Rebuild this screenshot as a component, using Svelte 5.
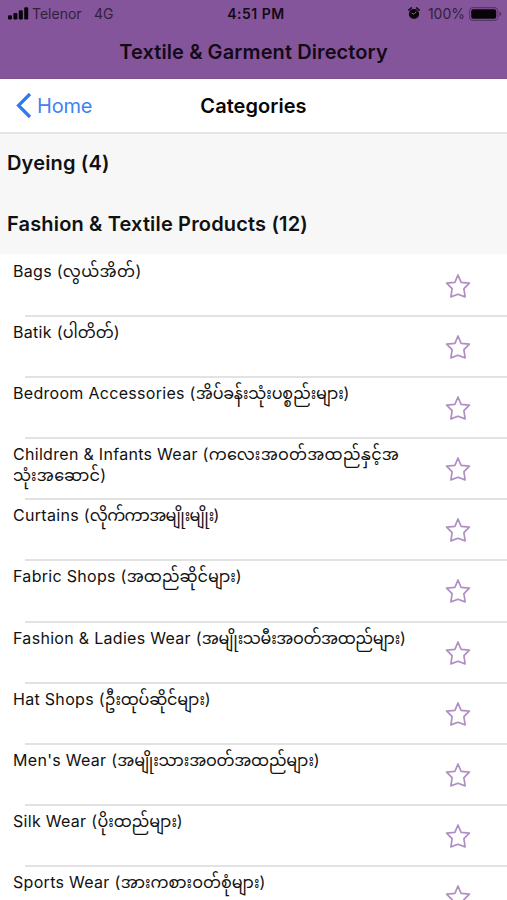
<script>
  const sections = ['Dyeing (4)', 'Fashion & Textile Products (12)'];
  const items = [
    { en: 'Bags', my: ['လွယ်အိတ်'], tracking: 0.35 },
    { en: 'Batik', my: ['ပါတိတ်'], tracking: 0 },
    { en: 'Bedroom Accessories', my: ['အိပ်ခန်းသုံးပစ္စည်းများ'], tracking: -0.2 },
    { en: 'Children & Infants Wear', my: ['ကလေးအဝတ်အထည်နှင့်အ', 'သုံးအဆောင်'], tracking: 0.25 },
    { en: 'Curtains', my: ['လိုက်ကာအမျိုးမျိုး'], tracking: -0.65 },
    { en: 'Fabric Shops', my: ['အထည်ဆိုင်များ'], tracking: 0 },
    { en: 'Fashion & Ladies Wear', my: ['အမျိုးသမီးအဝတ်အထည်များ'], tracking: -0.4 },
    { en: 'Hat Shops', my: ['ဦးထုပ်ဆိုင်များ'], tracking: -0.2 },
    { en: "Men's Wear", my: ['အမျိုးသားအဝတ်အထည်များ'], tracking: -0.27 },
    { en: 'Silk Wear', my: ['ပိုးထည်များ'], tracking: -0.1 },
    { en: 'Sports Wear', my: ['အားကစားဝတ်စုံများ'], tracking: 0 }
  ];
</script>

<div class="screen">
  <header>
    <div class="status">
      <svg class="signal" width="21" height="13" viewBox="0 0 21 13">
        <rect x="0" y="8.3" width="4" height="4.2" rx="1.2" />
        <rect x="5.4" y="6" width="4" height="6.5" rx="1.2" />
        <rect x="10.8" y="3.2" width="4" height="9.3" rx="1.2" />
        <rect x="16.2" y="0.3" width="4" height="12.2" rx="1.2" />
      </svg>
      <span class="carrier">Telenor</span>
      <span class="network">4G</span>
      <span class="time">4:51 PM</span>
      <svg class="alarm" width="12" height="13" viewBox="0 0 12 13">
        <circle cx="6" cy="7" r="5.1" />
        <path d="M.8 3.1 3.4.9M11.2 3.1 8.6.9" stroke="#120a16" stroke-width="1.6" stroke-linecap="round" />
        <path d="M8.2 4.5 6 7.3 3.8 6.2" fill="none" stroke="#85559b" stroke-width="1" stroke-linecap="round" />
      </svg>
      <span class="percent">100%</span>
      <svg class="battery" width="33" height="14" viewBox="0 0 33 14">
        <rect x="0.6" y="0.6" width="28.3" height="12.8" rx="3.6" fill="none" stroke="#57366a" stroke-width="1.1" />
        <rect x="2.2" y="2.2" width="25" height="9.6" rx="2" />
        <path d="M30.4 4.6q2 .8 2 2.4t-2 2.4z" fill="#57366a" />
      </svg>
    </div>
    <h1>Textile &amp; Garment Directory</h1>
  </header>
  <nav>
    <button>
      <svg width="17" height="27" viewBox="0 0 17 27"><path d="M14 2 2.5 13.5 14 25" fill="none" stroke="#2d7bf0" stroke-width="3.2" /></svg>
      <span>Home</span>
    </button>
    <h2>Categories</h2>
  </nav>
  {#each sections as title}
    <h3>{title}</h3>
  {/each}
  <ul>
    {#each items as item}
      <li>
        <p>{item.en} ({#each item.my as line, i}{#if i > 0}<br />{/if}<span style="letter-spacing: {item.tracking}px">{line}</span>{/each})</p>
        <svg width="26" height="26" viewBox="0 0 26 26">
          <path d="M13 2 16.1 9.3 24.4 10.2 18.9 15.7 20.1 23.9 13 21.2 5.9 23.9 7.1 15.7 1.6 10.2 9.9 9.3Z" />
        </svg>
      </li>
    {/each}
  </ul>
</div>

<style>
  .screen {
    width: 507px;
    height: 900px;
    overflow: hidden;
    background: #fff;
    color: #111;
    font-family: Inter, 'Noto Sans Myanmar', 'Noto Sans', sans-serif;
  }
  h1, h2, h3, p, ul { margin: 0; padding: 0; }
  header { height: 79px; box-sizing: border-box; background: #85559b; color: #120a16; border-bottom: 1px solid #79518b; }
  .status { height: 27px; display: flex; align-items: center; position: relative; font-size: 14px; }
  .status svg { fill: #08040a; flex: none; }
  .signal { margin-left: 8px; }
  .carrier { margin-left: 3px; width: 62px; color: #32203b; }
  .network { color: #32203b; }
  .time { position: absolute; left: 0; right: 0; padding-left: 5px; text-align: center; font-weight: 600; letter-spacing: 0.5px; }
  .alarm { margin-left: auto; }
  .percent { margin-left: 8px; color: #32203b; }
  .battery { margin: 0 5px 0 4px; }
  h1 { text-align: center; font-size: 20px; line-height: 50px; font-weight: 600; letter-spacing: 0.1px; }
  nav { height: 55px; box-sizing: border-box; border-bottom: 2px solid #e5e5e5; display: grid; grid-template-columns: 1fr auto 1fr; align-items: center; }
  button { border: 0; background: none; padding: 0 0 0 16px; display: flex; align-items: center; gap: 4px; color: #3f83ef; font: 20px Inter, sans-serif; letter-spacing: -0.2px; }
  h2 { font-size: 20px; font-weight: 600; color: #080808; letter-spacing: 0.05px; }
  h3 { height: 61px; line-height: 58px; padding-left: 7px; font-size: 20px; font-weight: 600; background: #f7f7f7; letter-spacing: 0.16px; }
  h3:has(+ ul) { height: 59px; }
  li { height: 61.1px; box-sizing: border-box; position: relative; display: flex; justify-content: space-between; padding: 7px 36px 0 13px; }
  li:first-child { height: 62.1px; padding-top: 8px; }
  li::after { content: ''; position: absolute; left: 25px; right: 0; bottom: -1px; height: 2px; background: #e2e2e2; }
  p { font-size: 16px; line-height: 21px; white-space: nowrap; letter-spacing: 0.3px; margin-top: -1px; }
  li svg { margin-top: 11px; fill: none; stroke: #b08fc2; stroke-width: 1.7; stroke-linejoin: round; }
</style>
